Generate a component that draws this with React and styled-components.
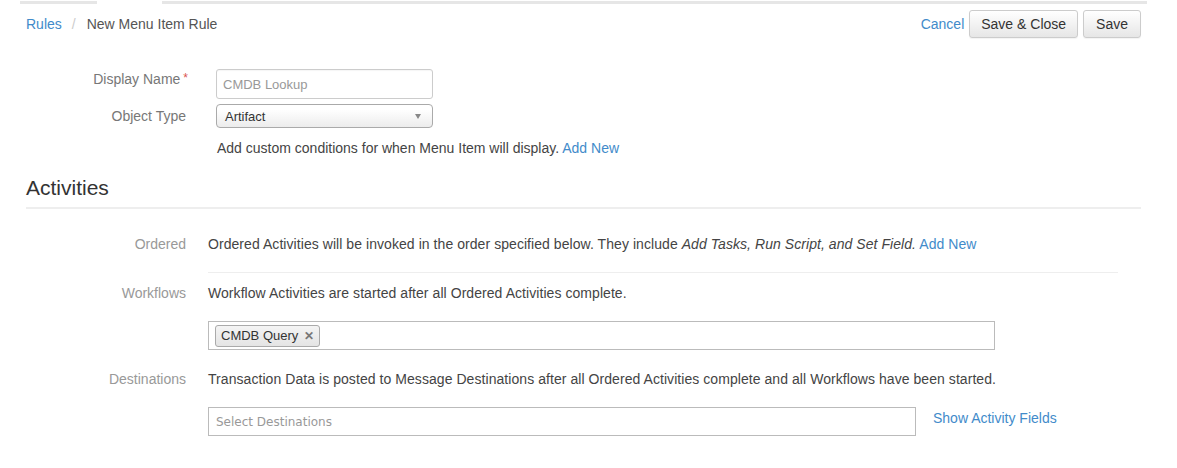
import React from "react"
import styled, { createGlobalStyle } from "styled-components"

const GlobalStyle = createGlobalStyle`
    body {
        margin: 0;
        background: #fff;
        font-family: "Liberation Sans", Arial, sans-serif;
        font-size: 14px;
        color: #444;
    }
    * { box-sizing: border-box; }
`

const Page = styled.div`
    width: 1177px;
    height: 468px;
    overflow: hidden;
`

const TabStrip = styled.div`
    display: flex;
    gap: 65px;
    padding: 1px 30px 0 20px;
`

const TabEdge = styled.div`
    height: 3px;
    background: #e6e6e6;
    width: ${p => p.$width ? p.$width + "px" : "auto"};
    flex: ${p => p.$width ? "none" : "1"};
`

const Header = styled.div`
    display: flex;
    justify-content: space-between;
    align-items: center;
    padding: 6px 36px 0 26px;
    height: 34px;
`

const Crumbs = styled.div`
    display: flex;
    align-items: center;
    gap: 10px;
    color: #555;

    & > span:last-child {
        margin-left: 1px;
    }
`

const Link = styled.a`
    color: #428bca;
    text-decoration: none;
    cursor: pointer;
    margin-top: ${p => p.$mt || 0}px;
`

const Sep = styled.span`
    color: #ccc;
`

const Actions = styled.div`
    display: flex;
    align-items: center;
    gap: 5px;
`

const Btn = styled.button`
    font-family: inherit;
    font-size: 14px;
    color: #333;
    height: 28px;
    padding: 0 ${p => p.$pad || 11}px;
    border: 1px solid #ccc;
    border-radius: 3px;
    background: linear-gradient(#fff, #e6e6e6);
    box-shadow: 0 1px 1px rgba(0,0,0,0.05);
`

const Form = styled.div`
    padding-top: 31px;
`

const FieldRow = styled.div`
    display: flex;
    align-items: ${p => p.$top ? "flex-start" : "center"};
    margin-bottom: ${p => p.$mb || 0}px;
`

const FieldLabel = styled.div`
    width: 188px;
    text-align: right;
    padding-right: ${p => p.$star ? 0 : 2}px;
    color: #777;
    margin-right: 28px;
    margin-top: ${p => p.$mt || 0}px;
`

const Star = styled.span`
    color: #d9534f;
    font-size: 12px;
    vertical-align: top;
    margin-left: 3px;
`

const TextInput = styled.div`
    width: 217px;
    height: 30px;
    border: 1px solid #ccc;
    border-radius: 3px;
    padding: 0 6px;
    display: flex;
    align-items: center;
    font-size: 13px;
    color: #999;
    box-shadow: inset 0 1px 1px rgba(0,0,0,0.04);
`

const Select = styled.div`
    width: 217px;
    height: 24px;
    border: 1px solid #aaa;
    border-radius: 4px;
    padding: 0 8px;
    display: flex;
    align-items: center;
    justify-content: space-between;
    font-size: 13px;
    color: #333;
    background: linear-gradient(#fff 20%, #ececec);
`

const Caret = styled.span`
    width: 0;
    height: 0;
    border-left: 3px solid transparent;
    border-right: 3px solid transparent;
    border-top: 5px solid #888;
    margin-right: 3px;
`

const Hint = styled.div`
    margin: 10px 0 0 217px;
    line-height: 20px;
    color: #444;
`

const Heading = styled.h2`
    margin: 16px 36px 0 26px;
    font-weight: normal;
    font-size: 21px;
    color: #333;
    line-height: 28px;
    padding-bottom: 5px;
    border-bottom: 2px solid #eee;
`

const Section = styled.div`
    padding: 25px 0 0 0;
`

const ActRow = styled.div`
    display: flex;
    align-items: flex-start;
    line-height: 20px;
    margin-top: ${p => p.$mt || 0}px;
`

const ActLabel = styled.div`
    width: 186px;
    text-align: right;
    color: #999;
    margin-right: 22px;
    flex: none;
`

const ActBody = styled.div`
    flex: 1;
    color: #444;
    padding-right: 59px;
    letter-spacing: 0.06px;
`

const Divider = styled.div`
    height: 1px;
    background: #eee;
    margin: 18px 0 10px 0;
`

const Multi = styled.div`
    margin-top: 18px;
    width: 787px;
    height: 29px;
    border: 1px solid #bbb;
    display: flex;
    align-items: center;
    padding: 0 6px;
    letter-spacing: 0;
`

const Tag = styled.span`
    display: inline-flex;
    align-items: center;
    gap: 6px;
    height: 22px;
    padding: 0 5px;
    border: 1px solid #aaa;
    border-radius: 3px;
    background: linear-gradient(#f4f4f4, #e4e4e4);
    font-size: 13px;
    color: #333;
`

const TagX = styled.span`
    font-size: 12px;
    color: #777;
    font-weight: bold;
`

const DestLine = styled.div`
    margin-top: 18px;
    display: flex;
    align-items: flex-start;
    gap: 17px;
    letter-spacing: 0;
`

const DestInput = styled.div`
    width: 708px;
    height: 29px;
    border: 1px solid #bbb;
    display: flex;
    align-items: center;
    padding: 0 7px;
    font-family: "DejaVu Sans", sans-serif;
    font-size: 12px;
    color: #999;
`

export default function App() {
    return (
        <Page>
            <GlobalStyle />
            <TabStrip>
                <TabEdge $width={77} />
                <TabEdge />
            </TabStrip>
            <Header>
                <Crumbs>
                    <Link>Rules</Link>
                    <Sep>/</Sep>
                    <span>New Menu Item Rule</span>
                </Crumbs>
                <Actions>
                    <Link>Cancel</Link>
                    <Btn>Save &amp; Close</Btn>
                    <Btn $pad={12}>Save</Btn>
                </Actions>
            </Header>

            <Form>
                <FieldRow $mb={5} $top>
                    <FieldLabel $star $mt={2}>Display Name<Star>*</Star></FieldLabel>
                    <TextInput>CMDB Lookup</TextInput>
                </FieldRow>
                <FieldRow>
                    <FieldLabel>Object Type</FieldLabel>
                    <Select>
                        Artifact
                        <Caret />
                    </Select>
                </FieldRow>
                <Hint>
                    Add custom conditions for when Menu Item will display. <Link>Add New</Link>
                </Hint>
            </Form>

            <Heading>Activities</Heading>

            <Section>
                <ActRow>
                    <ActLabel>Ordered</ActLabel>
                    <ActBody>
                        Ordered Activities will be invoked in the order specified below. They include <i>Add Tasks, Run Script, and Set Field.</i> <Link>Add New</Link>
                        <Divider />
                    </ActBody>
                </ActRow>
                <ActRow>
                    <ActLabel>Workflows</ActLabel>
                    <ActBody>
                        Workflow Activities are started after all Ordered Activities complete.
                        <Multi>
                            <Tag>CMDB Query <TagX>✕</TagX></Tag>
                        </Multi>
                    </ActBody>
                </ActRow>
                <ActRow $mt={19}>
                    <ActLabel>Destinations</ActLabel>
                    <ActBody>
                        Transaction Data is posted to Message Destinations after all Ordered Activities complete and all Workflows have been started.
                        <DestLine>
                            <DestInput>Select Destinations</DestInput>
                            <Link $mt={1}>Show Activity Fields</Link>
                        </DestLine>
                    </ActBody>
                </ActRow>
            </Section>
        </Page>
    )
}
